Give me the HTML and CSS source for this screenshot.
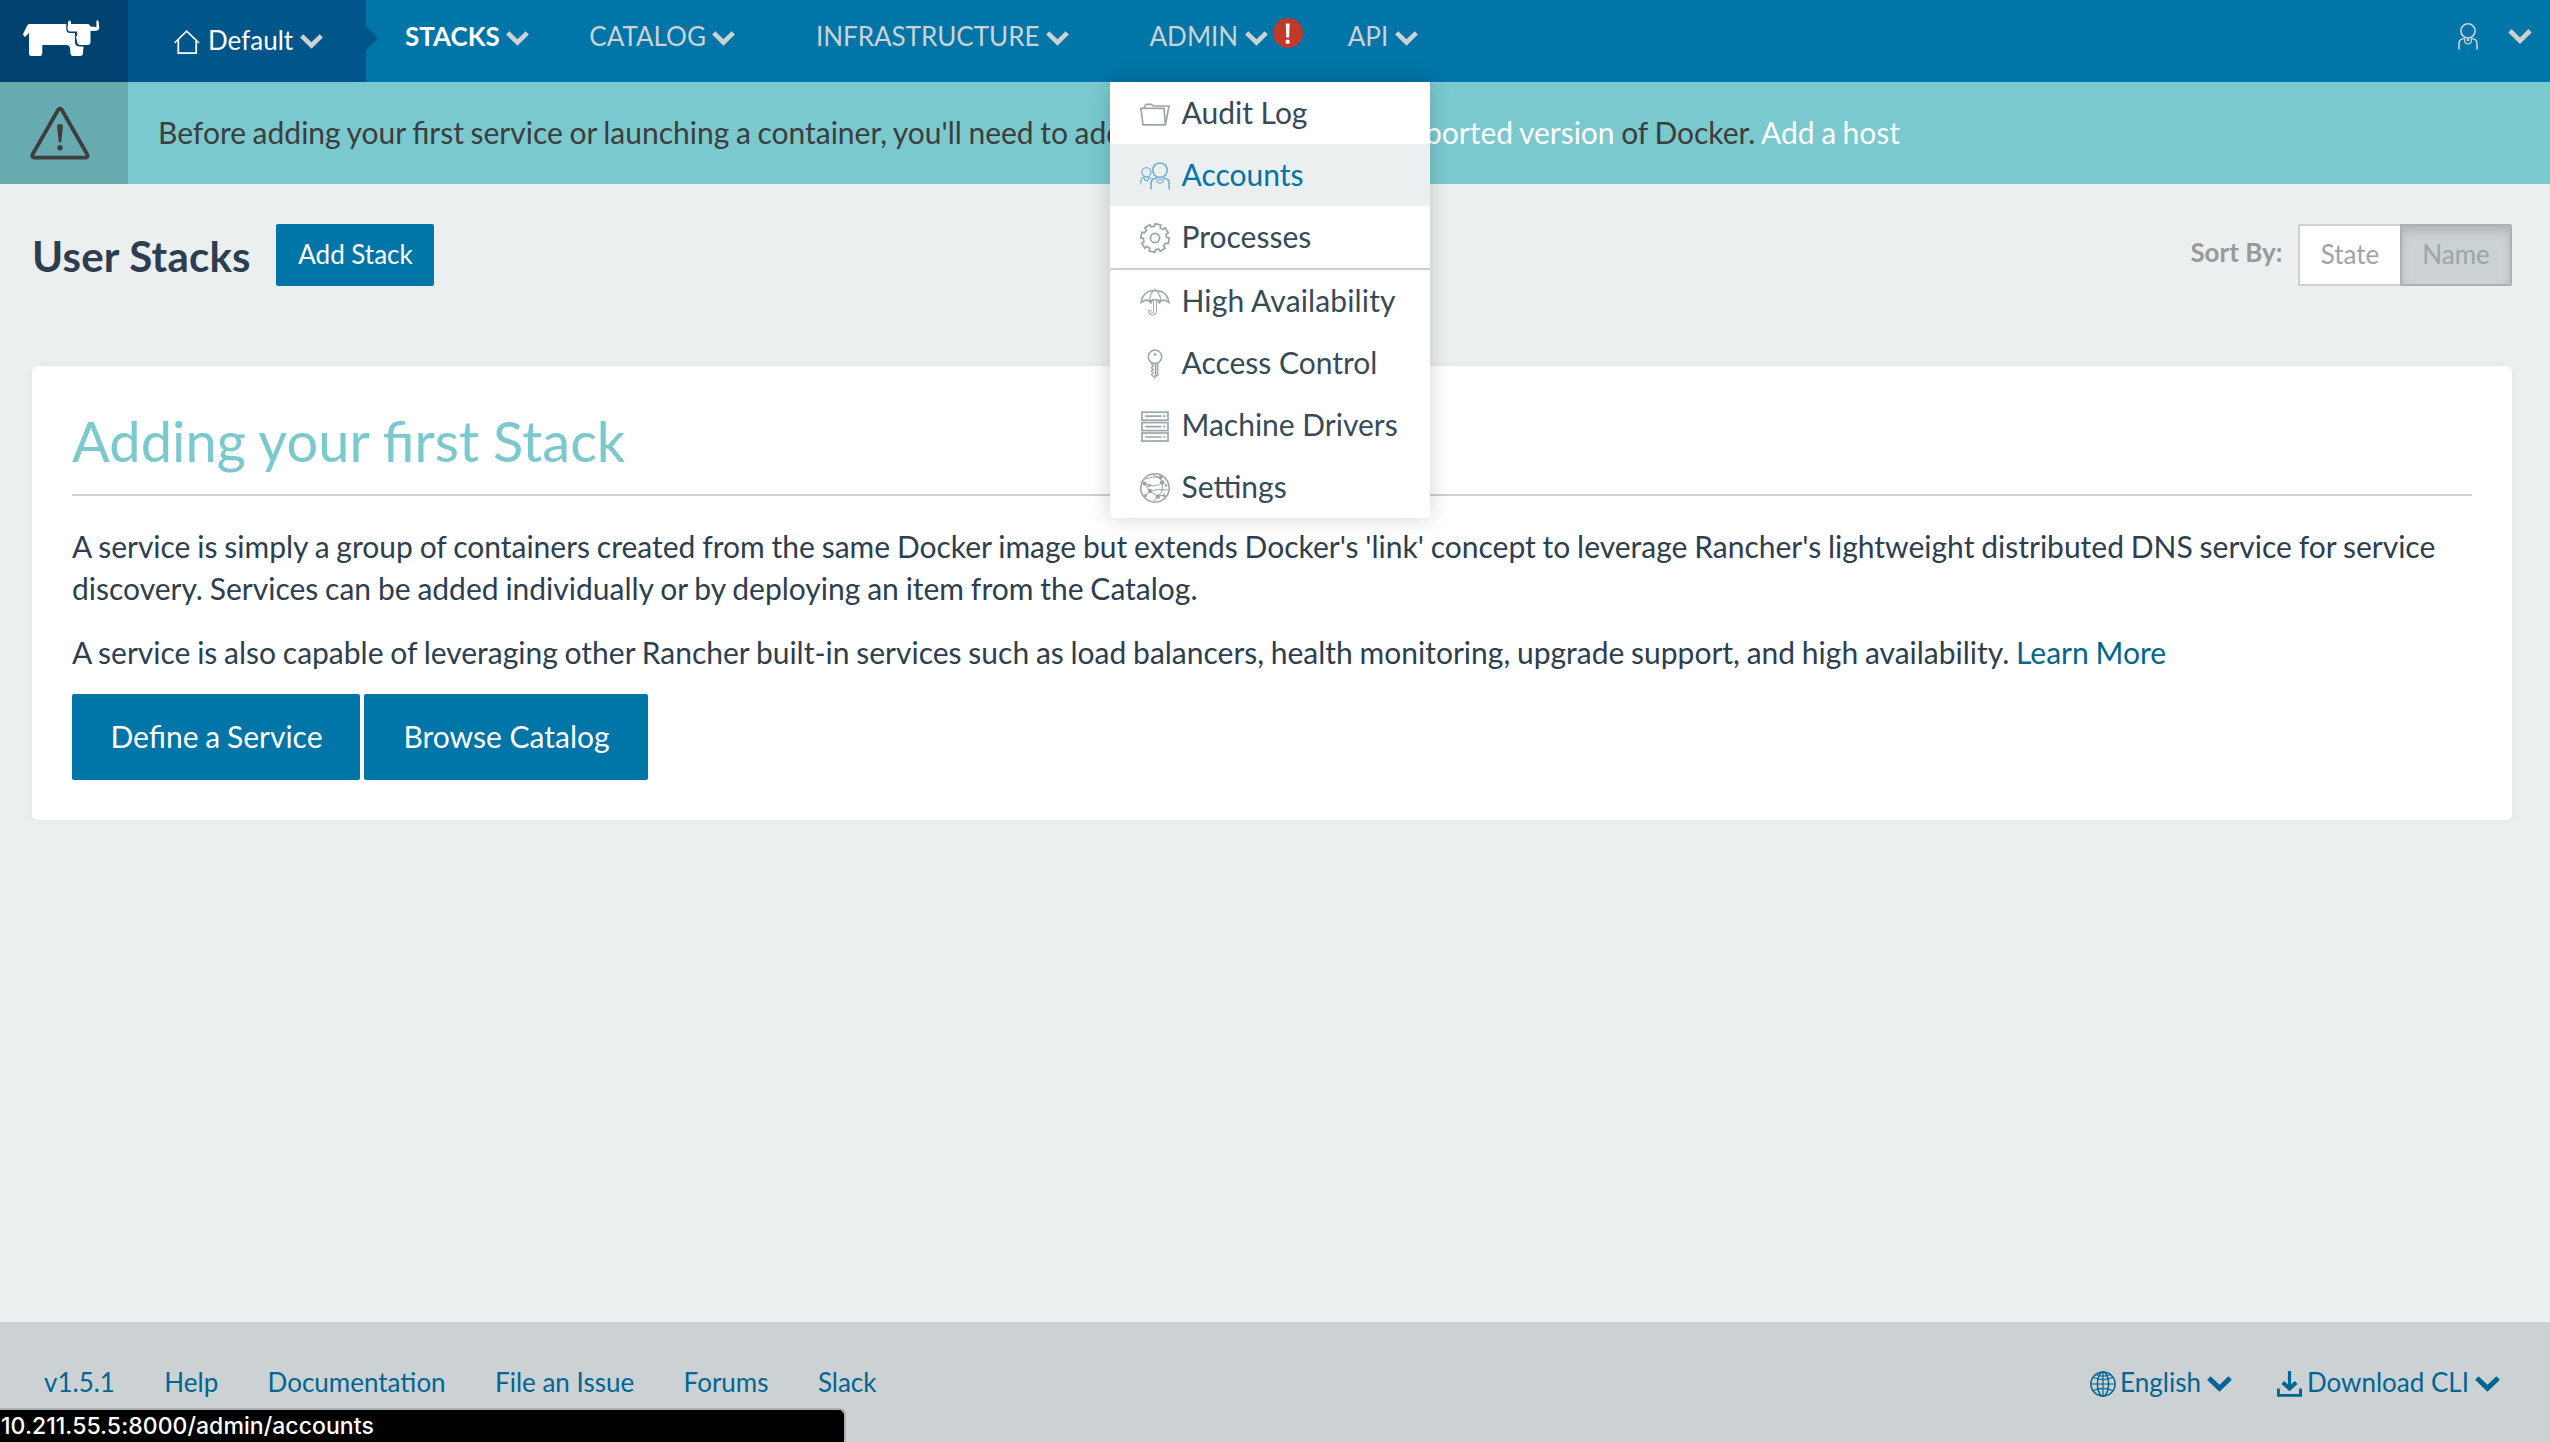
FILE: index.html
```html
<!DOCTYPE html>
<html lang="en">
<head>
<meta charset="utf-8">
<title>Rancher</title>
<link rel="stylesheet" href="styles.css">
</head>
<body>
<svg class="defs" width="0" height="0" aria-hidden="true">
  <symbol id="chevron" viewBox="0 0 23 14.6"><polyline points="1.7,1.7 11.5,11.3 21.3,1.7" fill="none" stroke="currentColor" stroke-width="4.6"/></symbol>
</svg>

<header class="navbar">
  <a class="logo" aria-label="Rancher">
    <svg width="80" height="38" viewBox="22 19 80 38" fill="#fff">
      <path d="M29 24H66.3V29Q66.3 33 70 33H75V42Q75 46.5 80 46.5H83.5L83 53Q83 56 80 56H73Q70.5 56 70.5 53L70 48Q69.5 45 66 45H42.3V53.5Q42.3 56 40 56H31.5Q29 56 29 53.5V33L25 37L22.8 34.5L27 26Q28 24 29 24Z"/>
      <path d="M68.2 22Q68.2 20.5 69.5 20.5Q71 20.5 71 22V24H88Q90 24 90.5 26.5L96.4 27V21.5Q96.6 20.2 97.6 20.3Q98.5 20.5 98.7 22L99.3 28Q99 30.6 96 30.8L90.5 31V42Q90.5 45 88 45H79.5Q77 44.5 77 41L76 37L77.2 35V31.5H70Q67.5 31.3 67.5 28Z"/>
    </svg>
  </a>
  <a class="environment">
    <svg width="27" height="25" viewBox="173 30 27 25" fill="none" stroke="#fff" stroke-width="1.7"><path d="M174.5 43L186.7 31.2L199 43M178.3 40V53.1H196.2V40"/></svg>
    <span class="environment-name">Default</span>
    <svg class="chev" width="23" height="15"><use href="#chevron"/></svg>
  </a>
  <nav class="menu">
    <a class="item item-stacks">STACKS<svg class="chev" width="23" height="15"><use href="#chevron"/></svg></a>
    <a class="item item-catalog">CATALOG<svg class="chev" width="23" height="15"><use href="#chevron"/></svg></a>
    <a class="item item-infra">INFRASTRUCTURE<svg class="chev" width="23" height="15"><use href="#chevron"/></svg></a>
    <div class="item item-admin">ADMIN<svg class="chev" width="23" height="15"><use href="#chevron"/></svg>
      <svg class="badge" width="30" height="30" viewBox="0 0 30 30"><circle cx="15" cy="15" r="15" fill="#c0392b"/><path d="M12.8 5.5H16.6L16.1 19.6H13.3Z" fill="#fff"/><circle cx="14.7" cy="23.8" r="2.2" fill="#fff"/></svg>
    </div>
    <a class="item item-api">API<svg class="chev" width="23" height="15"><use href="#chevron"/></svg></a>
  </nav>
  <a class="user">
    <svg width="20" height="27" viewBox="0 0 20 27" fill="none" stroke="currentColor" stroke-width="1.6"><circle cx="10" cy="7.9" r="7.1"/><path d="M1 26.5V20.5Q1.3 15.6 6.6 15.5M13.4 15.5Q18.7 15.6 19 20.5V26.5"/><path d="M6.6 15.4V17.5A3.4 3.4 0 0 0 13.4 17.5V15.4M8.6 16.5A1.6 2 0 0 0 11.4 16.5M10 15V18" stroke-width="1.2"/></svg>
    <svg class="chev" width="24" height="15"><use href="#chevron"/></svg>
  </a>

  <div class="dropdown">
    <a class="option"><span class="icon"><svg width="30" height="23" viewBox="0 0 30 23" fill="none" stroke="currentColor" stroke-width="1.7"><path d="M.9 5.3H24L25.4 21.8H3Z"/><path d="M4.6 5V3.2L6.3 1.3H11.6L13.2 3H29L25.4 21.8"/></svg></span>Audit Log</a>
    <a class="option selected"><span class="icon"><svg width="30" height="28" viewBox="0 0 30 28" fill="none" stroke="currentColor" stroke-width="1.7"><circle cx="20" cy="8.2" r="7.2"/><path d="M11 27.5V21Q11.3 16.2 16.5 16M23.5 16Q28.8 16.2 29.2 21V27.5"/><path d="M16.8 16V18A3.2 3.2 0 0 0 23.2 18V16M18.6 17A1.5 2 0 0 0 21.4 17" stroke-width="1.1"/><circle cx="6.4" cy="10.3" r="4.6" stroke-width="1.3"/><path d="M.8 22.5V19Q1 15.7 4.2 15.4M8.6 15.4Q10 15.6 10.9 16.7M4.4 15.4V16.6A2 2 0 0 0 8.4 16.6V15.4" stroke-width="1.2"/></svg></span>Accounts</a>
    <a class="option"><span class="icon"><svg width="30" height="30" viewBox="0 0 30 30" fill="none" stroke="currentColor" stroke-width="1.7"><path d="M26.2 12.1H29V17.9H26.2A11.6 11.6 0 0 1 24.97 20.87L26.95 22.85L22.85 26.95L20.87 24.97A11.6 11.6 0 0 1 17.9 26.2V29H12.1V26.2A11.6 11.6 0 0 1 9.13 24.97L7.15 26.95L3.05 22.85L5.03 20.87A11.6 11.6 0 0 1 3.8 17.9H1V12.1H3.8A11.6 11.6 0 0 1 5.03 9.13L3.05 7.15L7.15 3.05L9.13 5.03A11.6 11.6 0 0 1 12.1 3.8V1H17.9V3.8A11.6 11.6 0 0 1 20.87 5.03L22.85 3.05L26.95 7.15L24.97 9.13A11.6 11.6 0 0 1 26.2 12.1Z" transform="rotate(12 15 15)"/><circle cx="15" cy="15" r="4.6"/></svg></span>Processes</a>
    <div class="divider"></div>
    <a class="option option-wide"><span class="icon"><svg width="30" height="28" viewBox="0 0 30 28" fill="none" stroke="currentColor" stroke-width="1.5"><path d="M1 14.5Q3 2.5 15 2.5Q27 2.5 29 14.5Q24.5 10.5 20.5 13.2Q15 10 10 13.2Q5.5 10.5 1 14.5Z"/><path d="M15 .5V2.5M10 13Q9.5 6.5 13.5 2.7M20.5 13Q20.5 6.5 16.5 2.7" stroke-width="1.1"/><path d="M13.6 12V23.6Q13.5 25 12.4 25Q11 25 11.1 23.3L10.7 22.3H8.7V24Q9 27.2 12.4 27.2Q16 27 16.4 23.6V12" stroke-width="1"/><path d="M8.5 12L10.8 15L12.5 12M17.5 12L19.5 15L21.5 12" stroke-width="1.4"/></svg></span>High Availability</a>
    <a class="option"><span class="icon"><svg width="16" height="30" viewBox="0 0 16 30" fill="none" stroke="currentColor" stroke-width="1.5"><circle cx="8" cy="7.8" r="6.7"/><circle cx="8" cy="5.4" r="1" fill="currentColor" stroke-width=".8"/><path d="M5 14V16L6.2 17.2L4.2 18.8L6.2 20.4L4.2 22L6.2 23.6L4.4 25.4L7.6 28.6L10.8 25.5V14" stroke-width="1.3"/><path d="M8.6 15V27" stroke-width="1.7"/></svg></span>Access Control</a>
    <a class="option"><span class="icon"><svg width="28" height="31" viewBox="0 0 28 31" fill="none" stroke="currentColor" stroke-width="1.7"><rect x="1" y="1.2" width="26" height="8"/><rect x="1" y="11.6" width="26" height="8"/><rect x="1" y="22" width="26" height="8"/><path d="M4.2 5.2H20.5M22.2 5.2H24.4M4.2 15.6H20.5M22.2 15.6H24.4M4.2 26H20.5M22.2 26H24.4"/></svg></span>Machine Drivers</a>
    <a class="option"><span class="icon"><svg width="30" height="30" viewBox="0 0 30 30" fill="none" stroke="currentColor" stroke-width="1.6"><circle cx="15" cy="15" r="14.2"/><path d="M4 10L9.5 12.5Q17 14 22 9.5M4 10Q6.5 14 10 18M10 18Q18 15.5 28 17M10 18L4.5 23M10 18Q14 21 18 23.5M22 9.5Q24.5 17 18 23.5M22 9.5L20 4.5L13 2M24 22.5H18L14 28M6 6Q12 3 20 4.5" stroke-width="1"/><g fill="currentColor" stroke="none"><circle cx="4.5" cy="10.5" r="2"/><circle cx="9.3" cy="12.5" r="1.5"/><circle cx="10" cy="18" r="2.2"/><circle cx="22.2" cy="9.5" r="2.2"/><circle cx="20.5" cy="4.5" r="1.9"/><circle cx="18" cy="23.5" r="2.2"/><circle cx="24" cy="22.5" r="1.6"/><circle cx="26" cy="12.5" r="1.3"/><circle cx="5.5" cy="22.5" r="1.5"/></g></svg></span>Settings</a>
  </div>
</header>

<section class="banner">
  <div class="banner-icon">
    <svg width="62" height="54" viewBox="29 106 62 54" fill="none" stroke="#3d3d3d"><path d="M58 110Q60 107.5 62 110L87.3 154.5Q88.3 157.3 85.5 157.6H34.3Q31.5 157.3 32.5 154.5Z" stroke-width="3.8"/><path d="M57 126Q57.2 124 60 124Q62.8 124 63 126L61.2 142.5H58.8Z" fill="#3d3d3d" stroke="none"/><circle cx="60" cy="147.8" r="2.7" fill="#3d3d3d" stroke="none"/></svg>
  </div>
  <p class="banner-text">Before adding your first service or launching a container, you'll need to add a Linux host with a <a>supported version</a> of Docker. <a>Add a host</a></p>
</section>

<main class="content">
  <div class="toolbar">
    <h1 class="page-title">User Stacks</h1>
    <button class="btn">Add Stack</button>
    <div class="sort">
      <span class="sort-label">Sort By:</span>
      <button class="sort-btn sort-state">State</button>
      <button class="sort-btn sort-name">Name</button>
    </div>
  </div>

  <section class="panel">
    <h2 class="panel-title">Adding your first Stack</h2>
    <p class="para">A service is simply a group of containers created from the same Docker image but extends Docker's 'link' concept to leverage Rancher's lightweight distributed DNS service for service discovery. Services can be added individually or by deploying an item from the Catalog.</p>
    <p class="para para-more">A service is also capable of leveraging other Rancher built-in services such as load balancers, health monitoring, upgrade support, and high availability. <a class="link">Learn More</a></p>
    <div class="actions">
      <button class="btn btn-lg btn-define">Define a Service</button>
      <button class="btn btn-lg btn-browse">Browse Catalog</button>
    </div>
  </section>
</main>

<footer class="footer">
  <div class="footer-links">
    <a>v1.5.1</a><a>Help</a><a>Documentation</a><a>File an Issue</a><a>Forums</a><a>Slack</a>
  </div>
  <div class="footer-tools">
    <a class="tool"><svg width="26" height="26" viewBox="0 0 26 26" fill="none" stroke="currentColor" stroke-width="1.5"><circle cx="13" cy="13" r="12.1"/><ellipse cx="13" cy="13" rx="5.6" ry="12.1"/><path d="M13 1V25M.9 13H25.1M3 6.2Q13 11 23 6.2M3 19.8Q13 15 23 19.8M5.5 3.5Q13 7 20.5 3.5" stroke-width="1.2"/></svg><span>English</span><svg class="chev" width="25" height="16"><use href="#chevron"/></svg></a>
    <a class="tool"><svg width="25" height="26" viewBox="0 0 25 26" fill="none" stroke="currentColor"><path d="M12.5 0V17" stroke-width="3.2"/><path d="M5.8 11.5L12.5 17.5L19.2 11.5" stroke-width="4"/><path d="M1.4 17.5V24.4H23.6V17.5" stroke-width="2.9"/></svg><span>Download CLI</span><svg class="chev" width="25" height="16"><use href="#chevron"/></svg></a>
  </div>
</footer>

<div class="status">10.211.55.5:8000/admin/accounts</div>
</body>
</html>
```
FILE: styles.css
```css
* { box-sizing: border-box; }

html, body { height: 100%; }

body {
  margin: 0;
  display: flex;
  flex-direction: column;
  background: #ebeff0;
  color: #2c3e50;
  font: 400 30px/42px Lato, sans-serif;
  overflow: hidden;
}

h1, h2, p { margin: 0; }
button { font-family: inherit; margin: 0; }
svg { display: block; flex: none; }
.defs { position: absolute; }

/* Navigation */
.navbar {
  position: relative;
  z-index: 2;
  display: flex;
  flex: none;
  height: 82px;
  background: #0075a8;
  color: #ccd1d3;
  font-size: 26px;
}
.logo {
  width: 128px;
  padding: 19px 0 0 22px;
  background: #00426f;
}
.environment {
  position: relative;
  display: flex;
  align-items: center;
  width: 238px;
  height: 82px;
  padding: 0 0 2px 45px;
  background: #00558b;
}
.environment::after {
  content: "";
  position: absolute;
  left: 100%;
  top: 26px;
  border: 12px solid transparent;
  border-left: 12px solid #00558b;
  border-right: 0;
}
.environment-name { width: 92px; margin-left: 8px; color: #fff; }
.environment svg:first-child { margin-top: 4px; }
.environment .chev { margin-top: 2px; }

.menu { display: flex; height: 72px; }
.item { display: flex; align-items: center; }
.item .chev { margin: 4px 0 0 6.5px; }
.item-stacks { margin-left: 39px; color: #fff; font-weight: 700; }
.item-stacks .chev { color: #ccd1d3; }
.item-catalog { margin-left: 60px; }
.item-infra { margin-left: 80.5px; }
.item-admin { margin-left: 80.5px; }
.item-api { margin-left: 45px; }
.badge { margin: -6px 0 0 5px; }

.user {
  display: flex;
  align-items: center;
  gap: 30px;
  height: 72px;
  margin-left: auto;
  padding-right: 18px;
}

.dropdown {
  position: absolute;
  left: 1110px;
  top: 82px;
  width: 320px;
  background: #fff;
  border-radius: 0 0 4px 4px;
  box-shadow: 0 0 22px rgba(0, 0, 0, .18);
  color: #364b57;
  font-size: 30px;
}
.option {
  display: flex;
  align-items: center;
  height: 62px;
  padding: 0 0 2px 30px;
}
.option-wide { letter-spacing: .14px; }
.option .icon {
  display: flex;
  justify-content: center;
  width: 30px;
  margin: 4px 11.5px 0 0;
  color: #9aa5aa;
}
.option.selected { background: #ebeff0; color: #0075a8; }
.option.selected .icon { color: #75b2cd; }
.divider { height: 2px; background: #ccd1d3; }

/* Host warning */
.banner {
  display: flex;
  flex: none;
  height: 102px;
  background: #79c9cf;
  color: #3d3d3d;
}
.banner-icon { width: 128px; padding: 24px 0 0 29px; background: #67aaaf; }
.banner-text {
  padding: 29px 0 0 30px;
  white-space: nowrap;
  word-spacing: -1.1px;
}
.banner-text a { color: #fff; }

/* Page */
.content { flex: 1; padding: 40px 38px 0 32px; }
.toolbar { display: flex; align-items: center; height: 62px; }
.page-title {
  width: 244px;
  padding-top: 2px;
  font-size: 42px;
  font-weight: 700;
  letter-spacing: .22px;
}
.btn {
  width: 158px;
  height: 62px;
  padding: 0 0 2px 1px;
  border: 0;
  border-radius: 2px;
  background: #0075a8;
  color: #fff;
  font-size: 26px;
}
.sort { display: flex; align-items: center; height: 62px; margin-left: auto; }
.sort-label {
  margin: -6px 15.5px 0 0;
  color: #999;
  font-size: 26px;
  font-weight: 700;
}
.sort-btn {
  height: 62px;
  padding: 0 0 2px;
  border: 2px solid #ccd1d3;
  color: #9aa5aa;
  font-size: 26px;
}
.sort-state { width: 102px; border-right: 0; border-radius: 2px 0 0 2px; background: #fff; }
.sort-name {
  width: 112px;
  border-color: #a9b1b4;
  border-radius: 0 2px 2px 0;
  background: #ccd1d3;
  box-shadow: inset 0 6px 10px rgba(0, 0, 0, .125);
}

.panel {
  height: 454px;
  margin-top: 80px;
  padding: 40px;
  border-radius: 6px;
  background: #fff;
  box-shadow: 0 0 8px rgba(0, 0, 0, .04);
}
.panel-title {
  height: 90px;
  margin-bottom: 29px;
  padding-top: 1px;
  border-bottom: 2px solid #ccd1d3;
  color: #79c9cf;
  font-size: 56px;
  font-weight: 400;
  line-height: 68px;
  word-spacing: -.4px;
}
.para { margin-bottom: 22px; word-spacing: -.85px; }
.para-more { word-spacing: -.93px; }
.link { color: #00658f; }
.actions { display: flex; gap: 4px; margin-top: -1px; }
.btn-lg { height: 86px; font-size: 30px; }
.btn-define { width: 288px; word-spacing: -.9px; }
.btn-browse { width: 284px; }

/* Footer */
.footer {
  display: flex;
  flex: none;
  justify-content: space-between;
  height: 120px;
  padding: 39px 50px 0 44px;
  background: #ccd1d3;
  color: #006594;
  font-size: 26px;
}
.footer-links { display: flex; gap: 49.4px; }
.footer-tools { display: flex; gap: 45.5px; height: 42px; }
.tool { display: flex; align-items: center; }
.tool span { margin: 0 6px 0 4.5px; }
.tool svg { margin-top: 4px; }

.status {
  position: absolute;
  left: 0;
  bottom: 0;
  width: 846px;
  height: 34px;
  padding-left: 1px;
  border: solid #abb0b2;
  border-width: 2px 2px 0 0;
  border-radius: 0 7px 0 0;
  background: #000;
  color: #fff;
  font: 500 23px/32px Inter, sans-serif;
  letter-spacing: .06px;
}
```
